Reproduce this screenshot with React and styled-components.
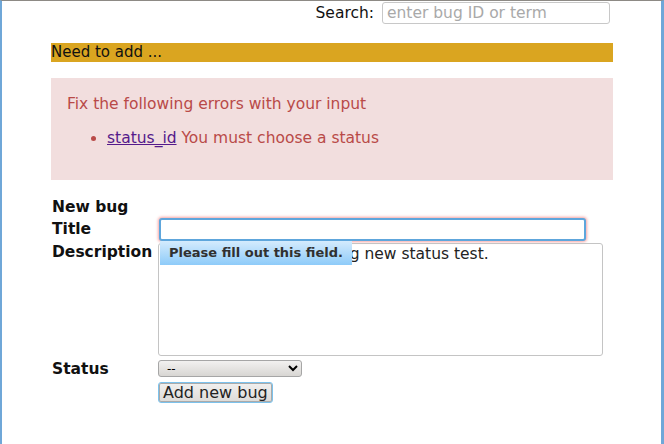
import React from 'react';
import styled, { createGlobalStyle } from 'styled-components';

const GlobalStyle = createGlobalStyle`
  html, body {
    margin: 0;
    padding: 0;
    background: #fff;
  }
  body {
    font-family: "DejaVu Sans", Verdana, sans-serif;
    font-size: 15.5px;
    color: #111;
  }
`;

export default function App() {
  return (
    <>
      <GlobalStyle />
      <Frame>
        <Page>
          <SearchBar>
            <SearchLabel>Search:</SearchLabel>
            <SearchInput placeholder="enter bug ID or term" />
          </SearchBar>
          <Notice>Need to add ...</Notice>
          <ErrorBox>
            <ErrorTitle>Fix the following errors with your input</ErrorTitle>
            <ErrorList>
              <li>
                <FieldLink href="#status_id">status_id</FieldLink> You must choose a status
              </li>
            </ErrorList>
          </ErrorBox>
          <BugForm>
            <FormHeading>New bug</FormHeading>
            <FormRow>
              <Label>Title</Label>
              <TitleInput />
            </FormRow>
            <FormRow>
              <Label>Description</Label>
              <Field>
                <DescBox role="textbox" aria-multiline="true">
                  This is my bug for testing new status test.
                </DescBox>
                <Tooltip>Please fill out this field.</Tooltip>
              </Field>
            </FormRow>
            <FormRow>
              <Label $top={2}>Status</Label>
              <StatusSelect defaultValue="">
                <option value="">--</option>
              </StatusSelect>
            </FormRow>
            <FormRow>
              <Label />
              <SubmitButton type="button">Add new bug</SubmitButton>
            </FormRow>
          </BugForm>
        </Page>
      </Frame>
    </>
  );
}

const Frame = styled.div`
  box-sizing: border-box;
  width: 664px;
  height: 444px;
  border-top: 1px solid #8d8a85;
  border-left: 2px solid #6fa7d8;
  border-right: 3px solid #6fa7d8;
  overflow: hidden;
`;

const Page = styled.div`
  width: 562px;
  margin-left: 49px;
`;

const SearchBar = styled.div`
  display: flex;
  justify-content: flex-end;
  align-items: center;
  gap: 8px;
  padding: 1px 3px 0 0;
  height: 22px;
`;

const SearchLabel = styled.span`
  font-size: 15.5px;
`;

const SearchInput = styled.input`
  box-sizing: border-box;
  width: 228px;
  height: 22px;
  border: 1px solid #c8c8c8;
  border-radius: 3px;
  padding: 0 4px;
  font-family: "DejaVu Sans", sans-serif;
  font-size: 15.5px;
  &::placeholder {
    color: #a9a9a9;
  }
`;

const Notice = styled.div`
  margin-top: 19px;
  height: 19px;
  line-height: 19px;
  background: #daa520;
  font-size: 15px;
  color: #111;
`;

const ErrorBox = styled.div`
  margin-top: 16px;
  height: 102px;
  box-sizing: border-box;
  padding: 16px 16px;
  background: #f2dede;
  color: #b94a48;
`;

const ErrorTitle = styled.div`
  line-height: 20px;
`;

const ErrorList = styled.ul`
  margin: 14px 0 0;
  padding-left: 40px;
  line-height: 20px;
`;

const FieldLink = styled.a`
  color: #551a8b;
`;

const BugForm = styled.form`
  margin-top: 16px;
`;

const FormHeading = styled.div`
  font-weight: bold;
  line-height: 21px;
  padding: 1px 0 0 1px;
`;

const FormRow = styled.div`
  display: flex;
  align-items: flex-start;
`;

const Label = styled.div`
  width: 106px;
  padding-left: 1px;
  padding-top: ${p => p.$top || 0}px;
  font-weight: bold;
  line-height: 22px;
`;

const Field = styled.div`
  position: relative;
`;

const TitleInput = styled.input`
  box-sizing: border-box;
  width: 427px;
  height: 23px;
  margin-left: 1px;
  border: 2px solid #5ea6dc;
  border-radius: 3px;
  box-shadow: 0 0 3px 1px #f6a5a5;
  outline: none;
`;

const DescBox = styled.div`
  box-sizing: border-box;
  width: 445px;
  height: 113px;
  margin-top: 2px;
  border: 1px solid #c4c4c4;
  border-radius: 3px;
  padding: 1px 3px;
  font-size: 15.5px;
  line-height: 19px;
  color: #222;
  white-space: nowrap;
  overflow: hidden;
`;

const Tooltip = styled.div`
  position: absolute;
  left: 2px;
  top: 0;
  height: 24px;
  line-height: 24px;
  padding: 0 9px;
  background: linear-gradient(#d4ebfd, #8ecbf9);
  color: #303030;
  font-size: 13px;
  font-weight: bold;
`;

const StatusSelect = styled.select`
  box-sizing: border-box;
  width: 144px;
  height: 17px;
  margin-top: 4px;
  border: 1px solid #a6a6a6;
  border-radius: 3px;
  background: linear-gradient(#f2f1f0, #d8d6d3);
  font-family: "DejaVu Sans", sans-serif;
  font-size: 12px;
  padding: 0 4px;
`;

const SubmitButton = styled.button`
  box-sizing: border-box;
  height: 21px;
  padding: 0 4px;
  margin-top: 2px;
  border: 1px solid #7cc2ec;
  border-radius: 3px;
  background: linear-gradient(#f1f0ef, #dddbd8);
  box-shadow: inset 0 0 0 1px #aaa;
  font-family: "DejaVu Sans", sans-serif;
  font-size: 16px;
  color: #222;
  line-height: 17px;
`;
